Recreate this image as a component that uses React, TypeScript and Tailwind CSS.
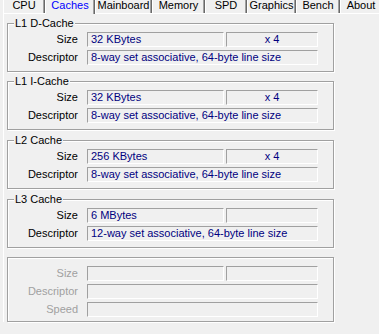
import React from 'react';
import clsx from 'clsx';

// CPU-Z style "Caches" tab

interface CacheInfo {
  title: string;
  size: string;
  count: string;
  descriptor: string;
}

const caches: CacheInfo[] = [
  { title: 'L1 D-Cache', size: '32 KBytes', count: 'x 4', descriptor: '8-way set associative, 64-byte line size' },
  { title: 'L1 I-Cache', size: '32 KBytes', count: 'x 4', descriptor: '8-way set associative, 64-byte line size' },
  { title: 'L2 Cache', size: '256 KBytes', count: 'x 4', descriptor: '8-way set associative, 64-byte line size' },
  { title: 'L3 Cache', size: '6 MBytes', count: '', descriptor: '12-way set associative, 64-byte line size' },
];

const tabs = [
  { name: 'CPU', w: 'w-[42px]' },
  { name: 'Caches', w: 'w-[50px]', active: true },
  { name: 'Mainboard', w: 'w-[57px]' },
  { name: 'Memory', w: 'w-[53px]' },
  { name: 'SPD', w: 'w-[42px]' },
  { name: 'Graphics', w: 'w-[49px]' },
  { name: 'Bench', w: 'w-[44px]' },
  { name: 'About', w: 'w-[42px]' },
];

function Field({ children, className, center }: { children?: React.ReactNode; className?: string; center?: boolean }) {
  return (
    <div
      className={clsx(
        'h-[15px] border border-t-[#a0a0a0] border-l-[#a0a0a0] border-r-white border-b-white leading-[13px] text-[#000080] whitespace-nowrap overflow-hidden',
        center ? 'text-center' : 'pl-[3px]',
        className
      )}
    >
      {children}
    </div>
  );
}

function Row({ label, disabled, split, value, count }: { label: string; disabled?: boolean; split?: boolean; value?: string; count?: string }) {
  return (
    <div className="flex h-[15px]">
      <div className={clsx('w-[70px] text-right leading-[15px]', disabled ? 'text-[#a0a0a0]' : 'text-black')}>{label}</div>
      <div className="ml-[9px] flex w-[231px] gap-[2px]">
        {split ? (
          <>
            <Field className="w-[137px]">{value}</Field>
            <Field className="flex-1" center>{count}</Field>
          </>
        ) : (
          <Field className="flex-1">{value}</Field>
        )}
      </div>
    </div>
  );
}

function GroupBox({ title, children, className }: { title?: string; children: React.ReactNode; className?: string }) {
  return (
    <div
      className={clsx(
        'relative w-[327px] border border-[#a0a0a0] shadow-[inset_1px_1px_0_#fff,1px_1px_0_#fff] pt-[8px] flex flex-col gap-[3px]',
        className
      )}
    >
      {title && (
        <div className="absolute left-[6px] top-[-6px] bg-[#f0f0f0] px-px leading-[11px] text-black">{title}</div>
      )}
      {children}
    </div>
  );
}

export default function App() {
  return (
    <div className="w-[379px] h-[334px] overflow-hidden bg-[#f0f0f0] font-['Liberation_Sans',Arial,sans-serif] text-[11px]">
      {/* Tabs */}
      <div className="flex h-[13px] pl-[3px] items-start">
        {tabs.map((t) => (
          <div
            key={t.name}
            className={clsx(
              'shrink-0 text-center leading-[11px] border-l border-l-white border-r border-r-[#696969] shadow-[inset_-1px_0_0_#a0a0a0]',
              t.w,
              t.active ? 'relative z-10 h-[14px] bg-[#f0f0f0] text-[#0000ff]' : 'h-[13px] text-black'
            )}
          >
            {t.name}
          </div>
        ))}
      </div>

      {/* Panel */}
      <div className="ml-[3px] border-t border-l border-white pl-[3px] pt-[9px] flex flex-col">
        {caches.map((c, i) => (
          <GroupBox
            key={c.title}
            title={c.title}
            className={clsx('pb-[6px]', i === 0 ? 'mt-0' : i === 1 ? 'mt-[9px]' : 'mt-[10px]')}
          >
            <Row label="Size" split value={c.size} count={c.count} />
            <Row label="Descriptor" value={c.descriptor} />
          </GroupBox>
        ))}

        <GroupBox className="mt-[9px] pb-[4px]">
          <Row label="Size" disabled split />
          <Row label="Descriptor" disabled />
          <Row label="Speed" disabled />
        </GroupBox>
      </div>
    </div>
  );
}
